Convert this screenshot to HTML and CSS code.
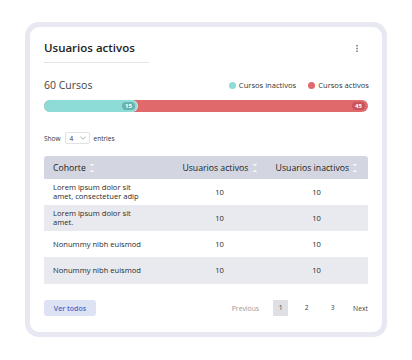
FILE: index.html
```html
<!DOCTYPE html>
<html lang="es">
<head>
    <meta charset="UTF-8">
    <meta name="viewport" content="width=device-width, initial-scale=1.0">
    <title>Usuarios activos</title>
    <link rel="stylesheet" href="styles.css">
</head>
<body>

    <div class="card">
        <div class="card-head">
            <h2 class="card-title">Usuarios activos</h2>
            <button class="menu-btn" aria-label="Opciones">
                <svg width="2" height="7" viewBox="0 0 2 7"><rect x="0.25" y="0" width="1.5" height="1.5" fill="#777"/><rect x="0.25" y="2.75" width="1.5" height="1.5" fill="#777"/><rect x="0.25" y="5.5" width="1.5" height="1.5" fill="#777"/></svg>
            </button>
        </div>

        <div class="stats">
            <span class="total">60 Cursos</span>
            <div class="legend">
                <span class="legend-item"><i class="dot inactive"></i>Cursos inactivos</span>
                <span class="legend-item"><i class="dot active"></i>Cursos activos</span>
            </div>
        </div>

        <div class="progress">
            <div class="progress-inactive" style="width: 28.7%;">
                <span class="pill">15</span>
            </div>
            <span class="pill pill-red">45</span>
        </div>

        <div class="show-row">
            Show
            <span class="select">4
                <svg width="6" height="4" viewBox="0 0 6 4"><path d="M0.5 0.8 L3 3.2 L5.5 0.8" fill="none" stroke="#999" stroke-width="0.8"/></svg>
            </span>
            entries
        </div>

        <table class="data-table">
            <thead>
                <tr>
                    <th class="col-name">Cohorte <span class="sort"></span></th>
                    <th>Usuarios activos <span class="sort"></span></th>
                    <th>Usuarios inactivos <span class="sort"></span></th>
                </tr>
            </thead>
            <tbody>
                <tr>
                    <td class="col-name">Lorem ipsum dolor sit<br>amet, consectetuer adip</td>
                    <td>10</td>
                    <td>10</td>
                </tr>
                <tr>
                    <td class="col-name">Lorem ipsum dolor sit<br>amet.</td>
                    <td>10</td>
                    <td>10</td>
                </tr>
                <tr>
                    <td class="col-name">Nonummy nibh euismod</td>
                    <td>10</td>
                    <td>10</td>
                </tr>
                <tr>
                    <td class="col-name">Nonummy nibh euismod</td>
                    <td>10</td>
                    <td>10</td>
                </tr>
            </tbody>
        </table>

        <div class="card-foot">
            <button class="btn-all">Ver todos</button>
            <div class="pagination">
                <span class="page-prev">Previous</span>
                <span class="page current">1</span>
                <span class="page">2</span>
                <span class="page">3</span>
                <span class="page-next">Next</span>
            </div>
        </div>
    </div>

</body>
</html>
```

FILE: styles.css
```css
/* --- Tarjeta usuarios activos --- */
body {
    font-family: 'Open Sans', sans-serif;
    background-color: #fff;
    margin: 0;
    color: #333;
}

.card {
    box-sizing: border-box;
    width: 362px;
    height: 315px;
    margin: 22px 0 0 25px;
    border: 5px solid #e7e8f2;
    border-radius: 14px;
    padding: 13px 14px 15px;
    display: flex;
    flex-direction: column;
}

.card-head {
    display: flex;
    justify-content: space-between;
    align-items: center;
}

.card-title {
    margin: 0;
    width: 105px;
    font-size: 11.5px;
    font-weight: 600;
    line-height: 16px;
    color: #222;
    padding-bottom: 6px;
    border-bottom: 1px solid #e3e4e8;
}

.menu-btn {
    background: none;
    border: none;
    padding: 0;
    margin: -6px 10px 0 0;
    line-height: 0;
    cursor: pointer;
}

.stats {
    display: flex;
    justify-content: space-between;
    align-items: center;
    margin-top: 16px;
    height: 12px;
}

.total {
    font-size: 10.5px;
    font-weight: 500;
    color: #444;
}

.legend {
    display: flex;
    gap: 12px;
    margin-right: -1px;
}

.legend-item {
    display: flex;
    align-items: center;
    gap: 3px;
    font-size: 7.6px;
    color: #333;
}

.dot {
    width: 7px;
    height: 7px;
    border-radius: 50%;
}

.dot.inactive { background-color: #8ddcd8; }
.dot.active { background-color: #e0696c; }

.progress {
    position: relative;
    margin-top: 9px;
    height: 12px;
    border-radius: 6px;
    background-color: #e0696c;
    display: flex;
    justify-content: flex-end;
    align-items: center;
}

.progress-inactive {
    position: absolute;
    left: 0;
    top: 0;
    bottom: 0;
    background-color: #8ddcd8;
    border-radius: 6px;
    box-shadow: 1px 0 0 #c9ece9;
    display: flex;
    justify-content: flex-end;
    align-items: center;
    padding-right: 2px;
    box-sizing: border-box;
}

.pill {
    height: 8px;
    min-width: 13px;
    border-radius: 4px;
    background-color: #69b3ae;
    color: #fff;
    font-size: 6px;
    font-weight: 700;
    line-height: 8px;
    text-align: center;
}

.pill-red {
    background-color: #c8545a;
    margin-right: 3px;
}

.show-row {
    display: flex;
    align-items: center;
    gap: 3px;
    margin-top: 20px;
    font-size: 6.5px;
    color: #333;
}

.select {
    box-sizing: border-box;
    width: 25px;
    height: 12px;
    border: 1px solid #e2e2e6;
    border-radius: 2px;
    display: flex;
    align-items: center;
    justify-content: space-between;
    padding: 0 3px 0 4px;
    margin: 0 1px;
}

.data-table {
    margin-top: 12px;
    width: 100%;
    border-collapse: collapse;
    table-layout: fixed;
}

.data-table th {
    background-color: #d3d6e0;
    height: 23px;
    font-size: 8.7px;
    font-weight: 500;
    color: #222;
    padding: 0;
    text-align: center;
}

.data-table th:first-child { border-top-left-radius: 3px; width: 121px; }
.data-table th:last-child { border-top-right-radius: 3px; width: 103px; }

.data-table td {
    height: 26px;
    padding: 0;
    font-size: 7.6px;
    line-height: 9px;
    color: #2a2a2a;
    text-align: center;
}

.data-table .col-name {
    text-align: left;
    padding-left: 9px;
}

.data-table tbody tr:nth-child(even) td {
    background-color: #e9eaef;
}

.data-table tbody tr:last-child td { height: 27px; }

.sort {
    display: inline-block;
    width: 4px;
    height: 8px;
    vertical-align: middle;
    margin-left: 2px;
    background:
        linear-gradient(to top right, transparent 50%, #f1f2f6 50%) 0 0 / 2px 3px no-repeat,
        linear-gradient(to top left, transparent 50%, #f1f2f6 50%) 2px 0 / 2px 3px no-repeat,
        linear-gradient(to bottom right, transparent 50%, #f1f2f6 50%) 0 5px / 2px 3px no-repeat,
        linear-gradient(to bottom left, transparent 50%, #f1f2f6 50%) 2px 5px / 2px 3px no-repeat;
}

.card-foot {
    margin-top: 16px;
    display: flex;
    justify-content: space-between;
    align-items: center;
}

.btn-all {
    width: 52px;
    height: 16px;
    border: none;
    border-radius: 3px;
    background-color: #dde3f5;
    color: #4a66c4;
    font-family: inherit;
    font-size: 7px;
    font-weight: 600;
    padding: 0;
    cursor: pointer;
}

.pagination {
    display: flex;
    align-items: center;
    gap: 11px;
    font-size: 6.8px;
}

.page-prev {
    color: #999;
    margin-right: 3px;
}

.page {
    width: 15px;
    height: 16px;
    line-height: 16px;
    text-align: center;
    color: #444;
}

.page.current {
    background-color: #dfe0e6;
}

.page-next {
    color: #444;
    margin-left: 2px;
}
```
